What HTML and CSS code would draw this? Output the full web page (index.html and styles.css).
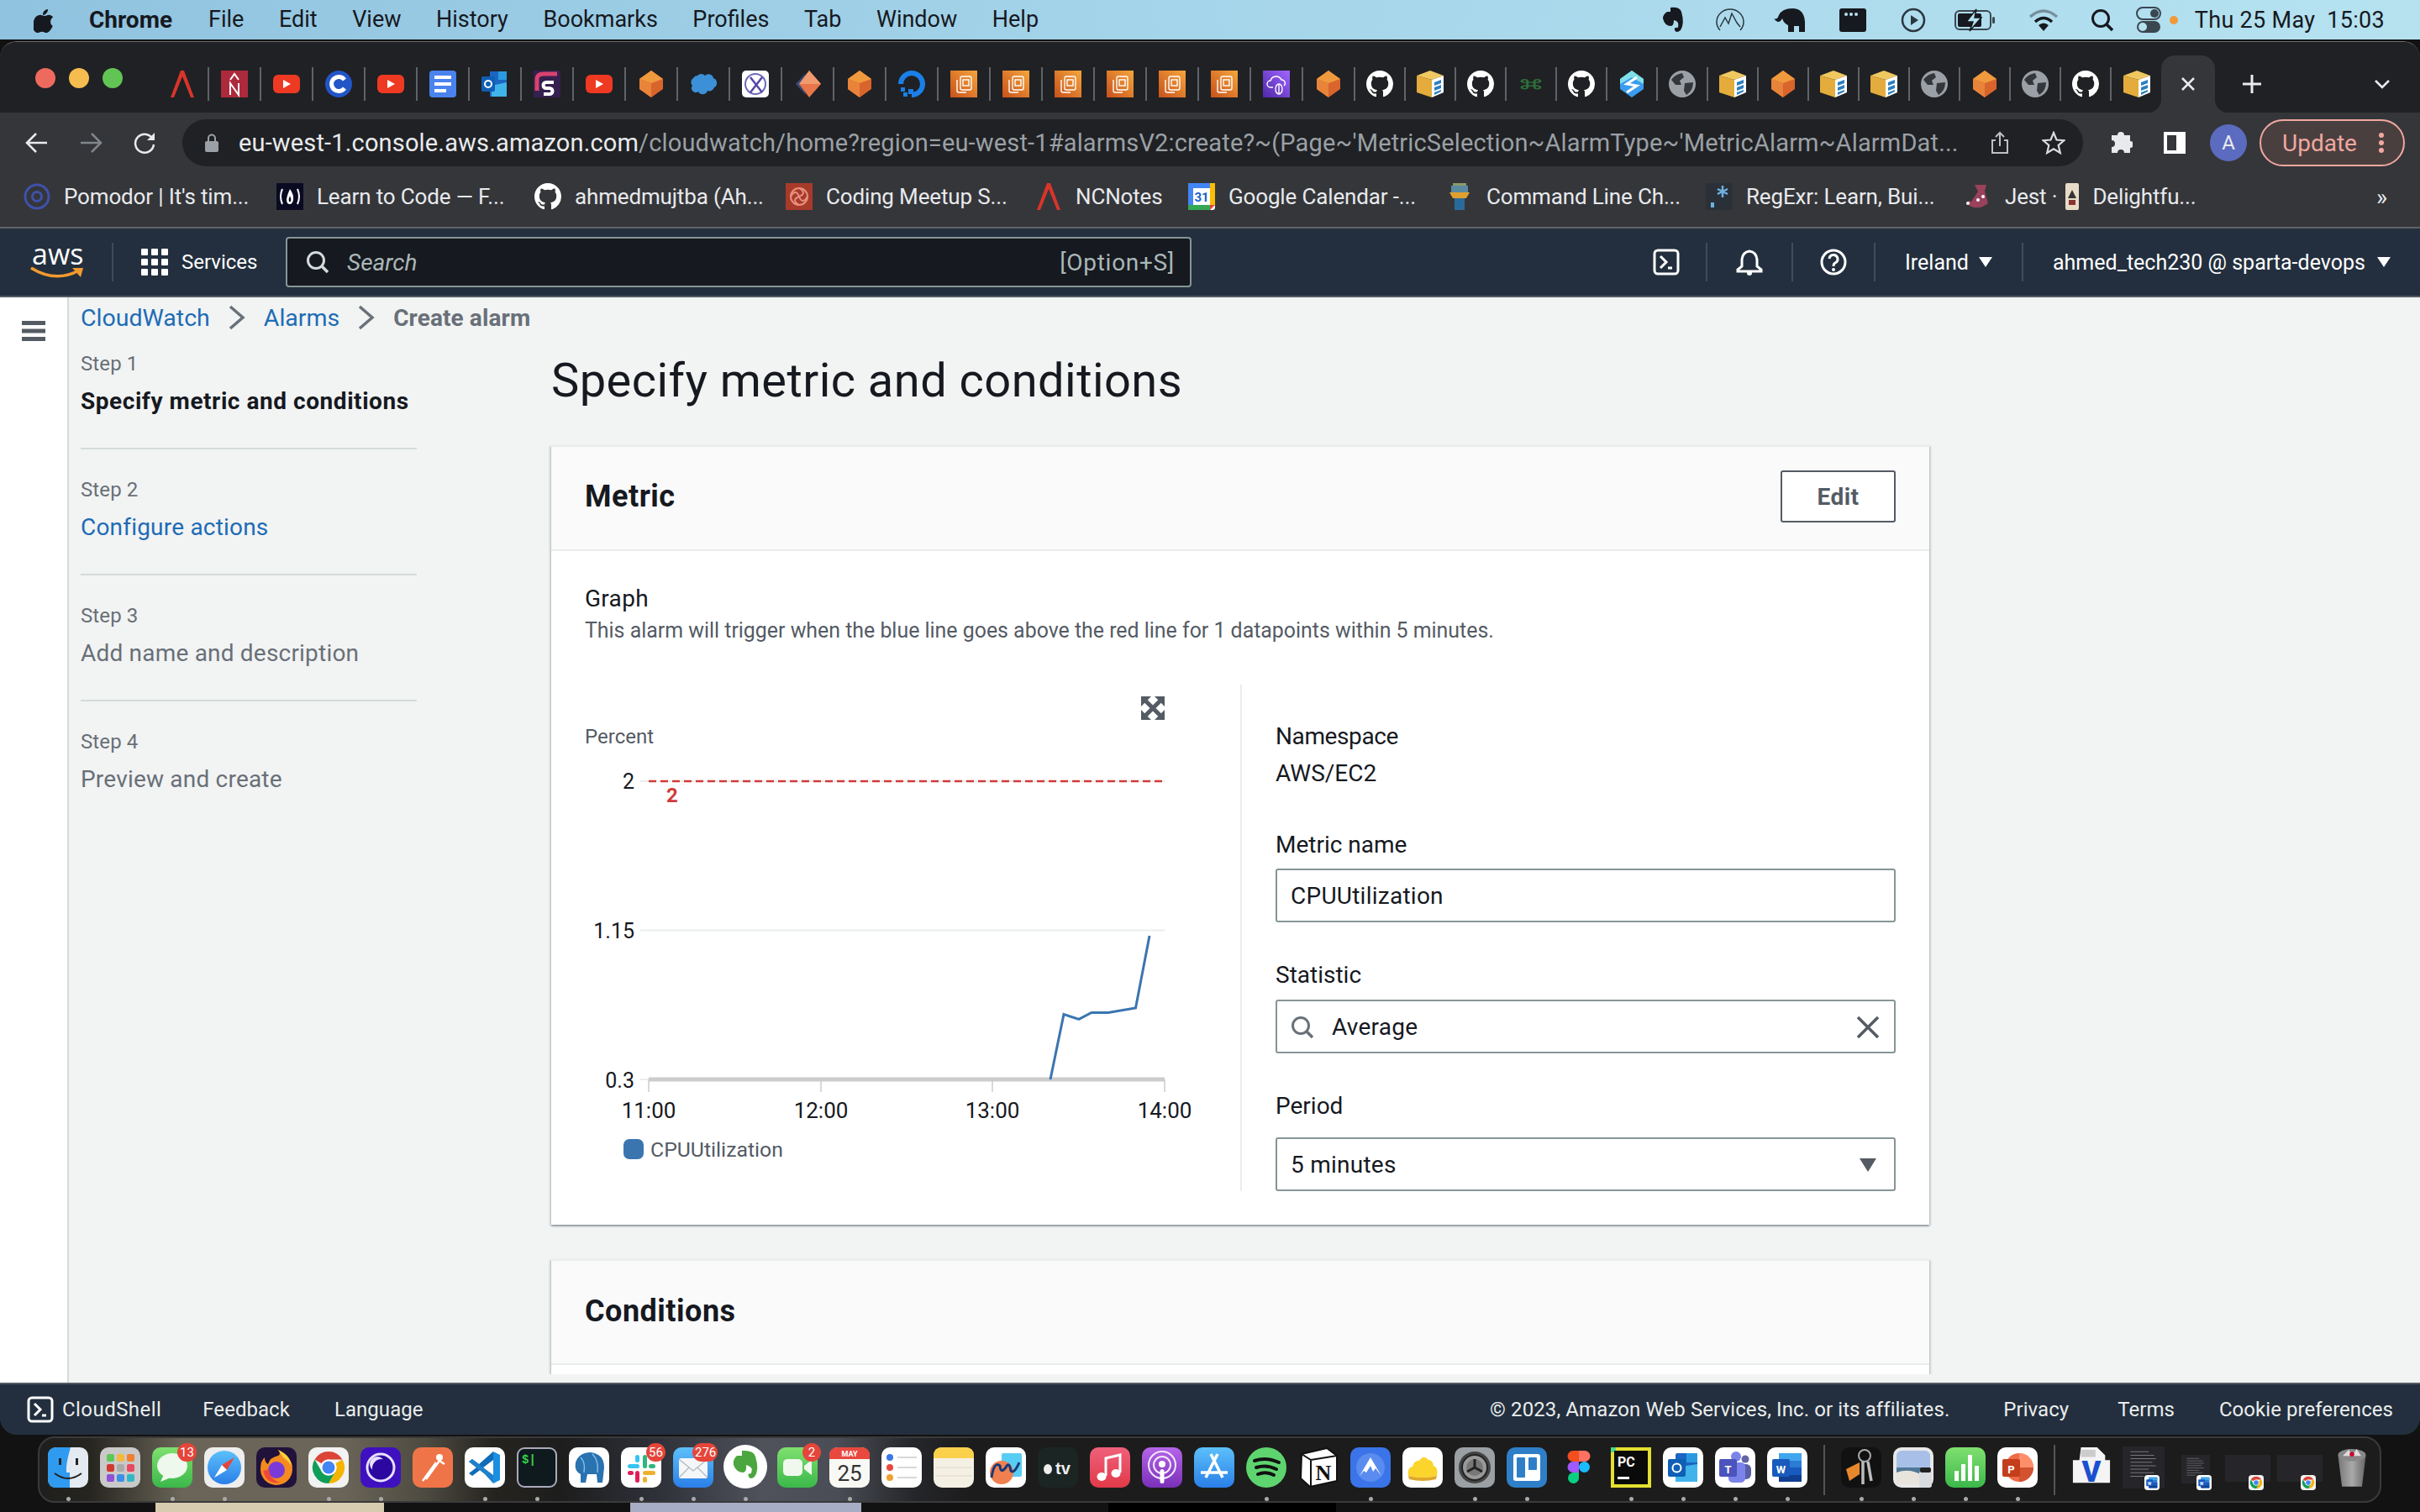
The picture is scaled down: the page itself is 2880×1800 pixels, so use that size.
FILE: index.html
```html
<!DOCTYPE html>
<html lang="en">
<head>
<meta charset="utf-8">
<title>Specify metric and conditions</title>
<link rel="stylesheet" href="styles.css">
</head>
<body>
<svg class="defs" xmlns="http://www.w3.org/2000/svg">
<defs>
<linearGradient id="gOrange" x1="0" y1="1" x2="1" y2="0"><stop offset="0" stop-color="#c8511b"/><stop offset="1" stop-color="#f5a63c"/></linearGradient>
<linearGradient id="gPurple" x1="0" y1="1" x2="1" y2="0"><stop offset="0" stop-color="#4d27a8"/><stop offset="1" stop-color="#a166ff"/></linearGradient>
<linearGradient id="gGreen" x1="0" y1="0" x2="0" y2="1"><stop offset="0" stop-color="#7fe06f"/><stop offset="1" stop-color="#3bb84a"/></linearGradient>
<linearGradient id="gBlue" x1="0" y1="0" x2="0" y2="1"><stop offset="0" stop-color="#5cc0fa"/><stop offset="1" stop-color="#2a7fe8"/></linearGradient>
<linearGradient id="gMusic" x1="0" y1="0" x2="0" y2="1"><stop offset="0" stop-color="#f0607a"/><stop offset="1" stop-color="#e03a48"/></linearGradient>
<linearGradient id="gPod" x1="0" y1="0" x2="0" y2="1"><stop offset="0" stop-color="#b565e8"/><stop offset="1" stop-color="#7a30b8"/></linearGradient>
<linearGradient id="gTrash" x1="0" y1="0" x2="1" y2="0"><stop offset="0" stop-color="#777"/><stop offset=".5" stop-color="#aaa"/><stop offset="1" stop-color="#666"/></linearGradient>

<!-- favicons, 32 box -->
<symbol id="f-caret" viewBox="0 0 32 32"><path d="M2 32 L14 0 H18 L30 32 H26 L16 7 L6 32Z" fill="#d8352a"/></symbol>
<symbol id="f-n" viewBox="0 0 32 32"><rect width="32" height="32" fill="#ac2a3c"/><path d="M11 11 L16 4 L21 11" fill="none" stroke="#fff" stroke-width="2"/><path d="M11 29V15L21 29V15" fill="none" stroke="#fff" stroke-width="2"/></symbol>
<symbol id="f-yt" viewBox="0 0 32 32"><rect y="5" width="32" height="22" rx="6" fill="#ee3a22"/><path d="M12 11 L21 16 L12 21Z" fill="#fff"/></symbol>
<symbol id="f-c" viewBox="0 0 32 32"><circle cx="16" cy="16" r="16" fill="#2255c8"/><path d="M23 11 A8.5 8.5 0 1 0 23 21" fill="none" stroke="#fff" stroke-width="5"/></symbol>
<symbol id="f-docs" viewBox="0 0 32 32"><rect width="32" height="32" rx="4" fill="#4a82ee"/><rect x="6" y="6" width="20" height="4" fill="#fff"/><rect x="6" y="14" width="20" height="4" fill="#fff"/><rect x="6" y="22" width="14" height="4" fill="#fff"/></symbol>
<symbol id="f-outlook" viewBox="0 0 32 32"><rect x="10" y="1" width="20" height="30" fill="#1a66c2"/><rect x="20" y="1" width="10" height="10" fill="#2a9ae0"/><path d="M12 18 L30 14V31H12Z" fill="#40b4ea"/><rect y="7" width="16" height="18" rx="2" fill="#0f5fb5"/><circle cx="8" cy="16" r="4" fill="none" stroke="#fff" stroke-width="2"/></symbol>
<symbol id="f-s" viewBox="0 0 32 32"><rect width="32" height="32" fill="#35204f"/><path d="M4 24V10Q4 4 12 4H28" fill="none" stroke="#d8426e" stroke-width="5"/><path d="M24 14H15a3 3 0 0 0 0 7h4a3 3 0 0 1 0 7H12" fill="none" stroke="#fff" stroke-width="4"/></symbol>
<symbol id="f-hex" viewBox="0 0 32 32"><path d="M16 0 L30 10V22L16 32 L2 22V10Z" fill="#d9642c"/><path d="M16 0 L30 10 L16 15 L2 10Z" fill="#f09a3e"/><path d="M2 10 L16 15V32 L2 22Z" fill="#e8843a"/></symbol>
<symbol id="f-cloud" viewBox="0 0 32 32"><path d="M9 6a6 6 0 0 1 9 0 6 6 0 0 1 10 3 6 6 0 0 1 1 11 6 6 0 0 1-8 4 6 6 0 0 1-11 1 5 5 0 0 1-7-7 6 6 0 0 1 1-9 6 6 0 0 1 5-3z" fill="#3c90d8"/></symbol>
<symbol id="f-x" viewBox="0 0 32 32"><rect width="32" height="32" rx="5" fill="#fff"/><circle cx="16" cy="16" r="12" fill="none" stroke="#6a6ab8" stroke-width="2"/><path d="M10 8 L24 26M24 8 L10 26" stroke="#5545a8" stroke-width="2.5"/></symbol>
<symbol id="f-diamond" viewBox="0 0 32 32"><path d="M14 3 L2 16 L14 29 L10 16Z" fill="#3a4a78"/><path d="M18 0 L32 16 L18 32 L6 16Z" fill="#e8764a"/><path d="M18 0 L6 16 H32Z" fill="#f09a70"/></symbol>
<symbol id="f-do" viewBox="0 0 32 32"><path d="M16 29 A13 13 0 1 0 3 16" fill="none" stroke="#1a7fe8" stroke-width="6"/><rect x="12" y="22" width="6" height="6" fill="#1a7fe8"/><rect x="6" y="26" width="5" height="5" fill="#1a7fe8"/><rect x="3" y="20" width="5" height="5" fill="#1a7fe8"/></symbol>
<symbol id="f-ec2" viewBox="0 0 32 32"><rect width="32" height="32" fill="url(#gOrange)"/><rect x="12" y="7" width="13" height="16" rx="2" fill="none" stroke="#fff" stroke-width="1.4"/><path d="M8 11V24a2 2 0 0 0 2 2H19" fill="none" stroke="#fff" stroke-width="1.4"/><rect x="15" y="11" width="7" height="7" fill="none" stroke="#fff" stroke-width="1.4"/></symbol>
<symbol id="f-pur" viewBox="0 0 32 32"><rect width="32" height="32" fill="url(#gPurple)"/><path d="M12 20H9a4 4 0 0 1 0-8 7 7 0 0 1 13-1 4 4 0 0 1 3 7" fill="none" stroke="#fff" stroke-width="1.4"/><ellipse cx="19" cy="22" rx="4" ry="6" fill="none" stroke="#fff" stroke-width="1.4"/><path d="M19 16V28" stroke="#fff" stroke-width="1.4"/></symbol>
<symbol id="f-gh" viewBox="0 0 16 16"><path fill="#fff" d="M8 0C3.58 0 0 3.58 0 8c0 3.54 2.29 6.53 5.47 7.59.4.07.55-.17.55-.38 0-.19-.01-.82-.01-1.49-2.01.37-2.53-.49-2.69-.94-.09-.23-.48-.94-.82-1.13-.28-.15-.68-.52-.01-.53.63-.01 1.08.58 1.23.82.72 1.21 1.87.87 2.33.66.07-.52.28-.87.51-1.07-1.78-.2-3.64-.89-3.64-3.95 0-.87.31-1.59.82-2.15-.08-.2-.36-1.02.08-2.12 0 0 .67-.21 2.2.82.64-.18 1.32-.27 2-.27.68 0 1.36.09 2 .27 1.53-1.04 2.2-.82 2.2-.82.44 1.1.16 1.92.08 2.12.51.56.82 1.27.82 2.15 0 3.07-1.87 3.75-3.65 3.95.29.25.54.73.54 1.48 0 1.07-.01 1.93-.01 2.2 0 .21.15.46.55.38A8.013 8.013 0 0016 8c0-4.42-3.58-8-8-8z"/></symbol>
<symbol id="f-box" viewBox="0 0 32 32"><path d="M0 6 L16 0 L32 6 L18 11Z" fill="#f0c860"/><path d="M0 6 L18 11V32 L0 26Z" fill="#e4ac3c"/><path d="M18 11 L32 6V26 L18 32Z" fill="#fff"/><path d="M21 14 L29 11V15 L21 18ZM21 20 L29 17V21 L21 24ZM21 26 L29 23V25 L21 29Z" fill="#2a7fc0"/></symbol>
<symbol id="f-cmd" viewBox="0 0 32 32"><g transform="translate(2.500 9.500) scale(.84 .42)"><path d="M11 11H21V21H11ZM11 11V7a4 4 0 1 0-4 4H25a4 4 0 1 0-4-4V25a4 4 0 1 0 4-4H7a4 4 0 1 0 4 4Z" fill="none" stroke="#2f6e3a" stroke-width="3.500"/></g></symbol>
<symbol id="f-shift" viewBox="0 0 32 32"><path d="M16 0 L30 10V22L16 32 L2 22V10Z" fill="#3a9cf0"/><path d="M16 0 L30 10V16L16 8 L2 16V10Z" fill="#7fe0e8"/><path d="M22 8 L10 16 L22 18 L10 26" fill="none" stroke="#fff" stroke-width="3"/></symbol>
<symbol id="f-globe" viewBox="0 0 32 32"><circle cx="16" cy="16" r="16" fill="#9aa0a6"/><path d="M3 11 Q8 4 16 3 L18 8 L13 12 L15 17 L8 17Z M19 15 L29 14 Q29 24 21 29 L18 24Z" fill="#35363a"/></symbol>

<!-- bookmark favicons -->
<symbol id="b-pomo" viewBox="0 0 32 32"><circle cx="16" cy="16" r="14" fill="none" stroke="#3f51a8" stroke-width="3"/><circle cx="16" cy="16" r="5.5" fill="none" stroke="#3f51a8" stroke-width="3"/></symbol>
<symbol id="b-fcc" viewBox="0 0 32 32"><rect width="32" height="32" fill="#0a0a23"/><path d="M7 7 Q3 16 7 25M25 7 Q29 16 25 25" fill="none" stroke="#fff" stroke-width="2"/><path d="M16 7 Q21 14 20 20 Q19 25 16 25 Q12 25 12 20 Q12 16 16 7Z" fill="#fff"/><path d="M16 15 Q18 19 17 22 L15 22 Q14 19 16 15Z" fill="#0a0a23"/></symbol>
<symbol id="b-spark" viewBox="0 0 32 32"><rect width="32" height="32" fill="#a83a2a"/><circle cx="16" cy="16" r="10" fill="none" stroke="#e89080" stroke-width="2"/><path d="M16 6 Q26 12 16 16 Q6 20 16 26M6 16 Q12 6 16 16 Q20 26 26 16" fill="none" stroke="#e89080" stroke-width="2"/></symbol>
<symbol id="b-cal" viewBox="0 0 32 32"><rect width="32" height="32" rx="3" fill="#fff"/><rect width="32" height="6" fill="#4285f4"/><rect width="6" height="32" fill="#4285f4"/><rect x="26" width="6" height="26" fill="#fbbc04"/><rect y="26" width="26" height="6" fill="#34a853"/><path d="M26 26H32L26 32Z" fill="#ea4335"/><text x="16" y="22" class="svg-cal">31</text></symbol>
<symbol id="b-tower" viewBox="0 0 32 32"><rect x="8" width="16" height="3" fill="#8a9a6a"/><rect x="6" y="3" width="20" height="8" fill="#5a8aa0"/><path d="M4 11H28L24 18H8Z" fill="#e0a030"/><rect x="10" y="18" width="12" height="14" fill="#2a6a9a"/></symbol>
<symbol id="b-regex" viewBox="0 0 32 32"><rect width="32" height="32" fill="#2a3038"/><rect x="6" y="23" width="4" height="6" fill="#70b0e0"/><path d="M20 3V17M14 7L26 13M26 7L14 13" stroke="#70b0e0" stroke-width="2.5"/></symbol>
<symbol id="b-jest" viewBox="0 0 32 32"><path d="M12 2H26L24 10 L28 24 Q18 32 8 28 L2 24 Q4 20 8 22 L16 10Z" fill="#99425b"/><circle cx="4" cy="24" r="2" fill="#fff"/><circle cx="16" cy="20" r="2" fill="#fff"/><circle cx="22" cy="16" r="2" fill="#fff"/></symbol>
<symbol id="b-card" viewBox="0 0 32 32"><rect x="8" width="16" height="32" rx="2" fill="#e8dcc8"/><path d="M16 8 L21 18H11Z" fill="#333"/><rect x="12" y="20" width="8" height="6" fill="#833"/></symbol>

<!-- dock icons 48 box -->
<symbol id="d-finder" viewBox="0 0 48 48"><rect width="48" height="48" rx="10" fill="#e4eaf2"/><path d="M10 0H27Q21 20 22 30H26V48H10Q0 48 0 38V10Q0 0 10 0Z" fill="#2f9bf0"/><rect x="13" y="13" width="3" height="8" fill="#222"/><rect x="33" y="13" width="3" height="8" fill="#222"/><path d="M8 31 Q24 43 40 31" fill="none" stroke="#222" stroke-width="2"/></symbol>
<symbol id="d-launch" viewBox="0 0 48 48"><rect width="48" height="48" rx="10" fill="#c9c9c9"/><g><rect x="8" y="8" width="9" height="9" rx="2" fill="#5cc85a"/><rect x="20" y="8" width="9" height="9" rx="2" fill="#f5b83c"/><rect x="32" y="8" width="9" height="9" rx="2" fill="#f08030"/><rect x="8" y="20" width="9" height="9" rx="2" fill="#d03a30"/><rect x="20" y="20" width="9" height="9" rx="2" fill="#aaa"/><rect x="32" y="20" width="9" height="9" rx="2" fill="#e84860"/><rect x="8" y="32" width="9" height="9" rx="2" fill="#9050d8"/><rect x="20" y="32" width="9" height="9" rx="2" fill="#3a90e8"/><rect x="32" y="32" width="9" height="9" rx="2" fill="#30b8c8"/></g></symbol>
<symbol id="d-msg" viewBox="0 0 48 48"><rect width="48" height="48" rx="10" fill="url(#gGreen)"/><ellipse cx="24" cy="22" rx="18" ry="15" fill="#eef8ec"/><path d="M14 32 L10 41 L22 36Z" fill="#eef8ec"/></symbol>
<symbol id="d-safari" viewBox="0 0 48 48"><rect width="48" height="48" rx="10" fill="#eee"/><circle cx="24" cy="24" r="20" fill="url(#gBlue)"/><path d="M36 12 L21 21 L27 27Z" fill="#e8443a"/><path d="M12 36 L21 21 L27 27Z" fill="#fff"/></symbol>
<symbol id="d-fox" viewBox="0 0 48 48"><rect width="48" height="48" rx="10" fill="#20123a"/><path d="M26 3 Q42 10 43 26 A19 19 0 0 1 5 26 Q5 16 10 12 Q10 18 14 20 Q16 12 26 10 Q30 8 26 3Z" fill="#f58a1f"/><path d="M26 3 Q42 10 43 26 Q43 20 32 12Z" fill="#fbd03c"/><circle cx="24" cy="27" r="10" fill="#7a3ad8"/><path d="M8 28 Q12 44 28 42 Q16 38 15 26Z" fill="#f0483a"/></symbol>
<symbol id="d-chrome" viewBox="0 0 48 48"><rect width="48" height="48" rx="10" fill="#f2f2f2"/><path d="M24 5 A19 19 0 0 1 40.5 14.5 H24 A9.5 9.5 0 0 0 15.8 19.2 L7.5 14.5 A19 19 0 0 1 24 5Z" fill="#db4437"/><path d="M40.5 14.5 A19 19 0 0 1 24 43 L32.2 28.8 A9.5 9.5 0 0 0 32.2 19.2 Z" fill="#f4b400"/><path d="M7.5 14.5 L15.8 28.8 A9.5 9.5 0 0 0 32.2 28.8 L24 43 A19 19 0 0 1 7.5 14.5Z" fill="#0f9d58"/><circle cx="24" cy="24" r="9.5" fill="#fff"/><circle cx="24" cy="24" r="7.5" fill="#4285f4"/></symbol>
<symbol id="d-proton" viewBox="0 0 48 48"><rect width="48" height="48" rx="10" fill="#3f10c0"/><circle cx="24" cy="24" r="16" fill="#2c08a0" stroke="#e8e0ff" stroke-width="3"/><circle cx="20" cy="20" r="9" fill="#e8e0ff"/><circle cx="25" cy="25" r="11" fill="#2c08a0"/></symbol>
<symbol id="d-postman" viewBox="0 0 48 48"><rect width="48" height="48" rx="10" fill="#ef7548"/><path d="M12 40 L28 18 M16 38 L32 16 M32 16 L38 20" stroke="#fff" stroke-width="2.5" fill="none"/><circle cx="32" cy="12" r="4" fill="#fff"/></symbol>
<symbol id="d-vscode" viewBox="0 0 48 48"><rect width="48" height="48" rx="10" fill="#fff"/><path d="M34 5 L42 9V39L34 43Z" fill="#1c8fe0"/><path d="M34 5V15 L17 28 L9 34 L5 31 L14 24 L5 17 L9 14 L17 20Z" fill="#0f6cb8"/><path d="M34 43V33 L9 14 L5 17 L24 32 Z" fill="#1f80cc"/></symbol>
<symbol id="d-term" viewBox="0 0 48 48"><rect x="1" y="1" width="46" height="46" rx="8" fill="#0f1a1e" stroke="#aab" stroke-width="2"/><text x="6" y="19" class="svg-term">$|</text></symbol>
<symbol id="d-pg" viewBox="0 0 48 48"><rect width="48" height="48" rx="10" fill="#fff"/><path d="M8 18 Q12 6 26 6 Q42 8 42 24 L40 42 H34 L33 32 H22 L20 42 H14 L14 32 Q6 28 8 18Z" fill="#2a72b0"/><path d="M14 12 Q20 18 18 30M28 8 Q36 16 34 30" fill="none" stroke="#80c0e8" stroke-width="1.5"/></symbol>
<symbol id="d-slack" viewBox="0 0 48 48"><rect width="48" height="48" rx="10" fill="#fff"/><rect x="8" y="20" width="14" height="5" rx="2.5" fill="#36c5f0"/><rect x="17" y="9" width="5" height="9" rx="2.5" fill="#36c5f0"/><rect x="26" y="9" width="5" height="16" rx="2.5" fill="#2eb67d"/><rect x="33" y="20" width="8" height="5" rx="2.5" fill="#2eb67d"/><rect x="26" y="28" width="15" height="5" rx="2.5" fill="#ecb22e"/><rect x="26" y="35" width="5" height="7" rx="2.5" fill="#ecb22e"/><rect x="17" y="28" width="5" height="14" rx="2.5" fill="#e01e5a"/><rect x="8" y="28" width="7" height="5" rx="2.5" fill="#e01e5a"/></symbol>
<symbol id="d-mail" viewBox="0 0 48 48"><rect width="48" height="48" rx="10" fill="url(#gBlue)"/><rect x="7" y="13" width="34" height="24" rx="2" fill="#f4f6f8"/><path d="M7 14 L24 28 L41 14M7 36 L19 24M41 36 L29 24" fill="none" stroke="#b0b8c0" stroke-width="1.2"/></symbol>
<symbol id="d-ever" viewBox="0 0 52 52"><circle cx="26" cy="26" r="26" fill="#fff"/><path d="M16 13 H22 V7 Q36 6 38 14 Q43 30 37 38 Q32 42 30 38 Q28 34 33 34 Q36 26 27 24 Q28 31 24 33 Q15 33 12 24 Q11 17 16 13Z" fill="#4ca63f"/></symbol>
<symbol id="d-face" viewBox="0 0 48 48"><rect width="48" height="48" rx="10" fill="url(#gGreen)"/><rect x="7" y="14" width="23" height="20" rx="5" fill="#f0f8ee"/><path d="M32 22 L41 15V33 L32 26Z" fill="#f0f8ee"/></symbol>
<symbol id="d-cal" viewBox="0 0 48 48"><rect width="48" height="48" rx="10" fill="#f8f8f4"/><path d="M0 14V10Q0 0 10 0H38Q48 0 48 10V14Z" fill="#e8483e"/><text x="24" y="11" class="svg-may">MAY</text><text x="24" y="40" class="svg-day">25</text></symbol>
<symbol id="d-rem" viewBox="0 0 48 48"><rect width="48" height="48" rx="10" fill="#fff"/><circle cx="10" cy="12" r="4" fill="#3a78e8"/><circle cx="10" cy="24" r="4" fill="#e8483e"/><circle cx="10" cy="36" r="4" fill="#f0a030"/><path d="M19 12H42M19 24H42M19 36H42" stroke="#ccc" stroke-width="1.5"/></symbol>
<symbol id="d-notes" viewBox="0 0 48 48"><rect width="48" height="48" rx="10" fill="#f4f0e4"/><path d="M0 13V10Q0 0 10 0H38Q48 0 48 10V13Z" fill="#fbd14c"/><path d="M2 24H46M2 34H46" stroke="#ddd8c8" stroke-width="1"/></symbol>
<symbol id="d-free" viewBox="0 0 48 48"><rect width="48" height="48" rx="10" fill="#fff"/><rect x="19" y="7" width="24" height="28" rx="2" fill="#58cdf4"/><circle cx="19" cy="30" r="14" fill="#f08050"/><path d="M7 36 Q10 16 17 22 Q18 32 24 24 Q28 16 30 28 Q34 32 40 18" fill="none" stroke="#163a78" stroke-width="3"/></symbol>
<symbol id="d-tv" viewBox="0 0 48 48"><rect width="48" height="48" rx="10" fill="#1b2524"/><ellipse cx="12" cy="26" rx="5" ry="6" fill="#eee"/><text x="30" y="32" class="svg-tv">tv</text></symbol>
<symbol id="d-music" viewBox="0 0 48 48"><rect width="48" height="48" rx="10" fill="url(#gMusic)"/><path d="M19 34V13L36 9V30" fill="none" stroke="#fff" stroke-width="3"/><ellipse cx="14" cy="35" rx="5.5" ry="5" fill="#fff"/><ellipse cx="31" cy="31" rx="5.5" ry="5" fill="#fff"/></symbol>
<symbol id="d-pod" viewBox="0 0 48 48"><rect width="48" height="48" rx="10" fill="url(#gPod)"/><circle cx="24" cy="21" r="16" fill="none" stroke="#f4e8ff" stroke-width="2"/><circle cx="24" cy="21" r="10" fill="none" stroke="#f4e8ff" stroke-width="2"/><circle cx="24" cy="20" r="4" fill="#fff"/><rect x="21.500" y="26" width="5" height="17" rx="2.500" fill="#fff"/></symbol>
<symbol id="d-store" viewBox="0 0 48 48"><rect width="48" height="48" rx="10" fill="url(#gBlue)"/><path d="M28 8 L14 36M20 8 L34 36M8 30H40" stroke="#fff" stroke-width="3.500" fill="none"/></symbol>
<symbol id="d-spot" viewBox="0 0 48 48"><circle cx="24" cy="24" r="24" fill="#5ed46f"/><path d="M10 16 Q24 11 39 18M12 24 Q24 20 36 26M14 32 Q24 28 33 33" fill="none" stroke="#111" stroke-width="4" stroke-linecap="round"/></symbol>
<symbol id="d-notion" viewBox="0 0 48 48"><path d="M4 8 L34 1 L46 10V40L14 47 L3 37Z" fill="#fff" stroke="#111" stroke-width="2"/><path d="M4 8 L15 15 L46 10M15 15V47" fill="none" stroke="#111" stroke-width="2"/><text x="30" y="39" class="svg-notion">N</text></symbol>
<symbol id="d-nord" viewBox="0 0 48 48"><rect width="48" height="48" rx="10" fill="#3a74e8"/><circle cx="24" cy="24" r="17" fill="#5a8cf0"/><path d="M11 34 L24 12 L37 34 L30 25 L27 29 L24 22 L19 30 L16 28Z" fill="#fff"/></symbol>
<symbol id="d-ycloud" viewBox="0 0 48 48"><rect width="48" height="48" rx="10" fill="#fff"/><path d="M7 34 Q5 24 12 23 Q14 15 20 16 Q25 8 31 15 Q36 15 37 22 Q43 24 41 34 Q24 38 7 34Z" fill="#fbd52c"/><path d="M7 34 Q24 38 41 34 L40 38 Q24 42 8 38Z" fill="#e0a828"/></symbol>
<symbol id="d-sys" viewBox="0 0 48 48"><rect width="48" height="48" rx="10" fill="#9aa0a4"/><circle cx="24" cy="24" r="19" fill="#444"/><circle cx="24" cy="24" r="15" fill="#999" stroke="#222" stroke-width="2"/><circle cx="24" cy="24" r="10" fill="#777"/><path d="M24 24V14M24 24L33 29M24 24L15 29" stroke="#222" stroke-width="3"/></symbol>
<symbol id="d-trello" viewBox="0 0 48 48"><rect width="48" height="48" rx="10" fill="#2f7fc8"/><rect x="8" y="8" width="32" height="32" rx="3" fill="#fff"/><rect x="12" y="12" width="10" height="24" rx="1" fill="#2f7fc8"/><rect x="26" y="12" width="10" height="15" rx="1" fill="#2f7fc8"/></symbol>
<symbol id="d-figma" viewBox="0 0 48 48"><rect width="48" height="48" rx="10" fill="#1c1c1c"/><path d="M24 4H17a6 6 0 0 0 0 13H24Z" fill="#f24e1e"/><path d="M24 4H31a6 6 0 0 1 0 13H24Z" fill="#ff7262"/><path d="M24 17H17a6 6 0 0 0 0 13H24Z" fill="#a259ff"/><circle cx="30.500" cy="23.500" r="6.500" fill="#1abcfe"/><path d="M24 30H17a6.500 6.500 0 1 0 7 6.500Z" fill="#0acf83"/></symbol>
<symbol id="d-py" viewBox="0 0 48 48"><rect width="48" height="48" fill="#e4e030"/><rect x="0" y="0" width="6" height="6" fill="#4ad88a"/><rect x="4" y="4" width="40" height="40" fill="#0a0a0a"/><text x="8" y="23" class="svg-pc">PC</text><rect x="8" y="35" width="14" height="3" fill="#fff"/></symbol>
<symbol id="d-out" viewBox="0 0 48 48"><rect width="48" height="48" rx="10" fill="#fff"/><rect x="15" y="7" width="26" height="34" rx="2" fill="#1a66c2"/><rect x="28" y="7" width="13" height="11" fill="#2a9ae0"/><path d="M15 24 L41 20V41H15Z" fill="#40b4ea"/><rect x="6" y="14" width="21" height="21" rx="2" fill="#0f5fb5"/><circle cx="16.500" cy="24.500" r="5" fill="none" stroke="#fff" stroke-width="2"/></symbol>
<symbol id="d-teams" viewBox="0 0 48 48"><rect width="48" height="48" rx="10" fill="#fff"/><circle cx="36" cy="14" r="4.500" fill="#6264a7"/><circle cx="25" cy="11" r="6" fill="#7b83eb"/><rect x="29" y="20" width="14" height="18" rx="6" fill="#5a5fa8"/><rect x="16" y="18" width="20" height="24" rx="5" fill="#7b83eb"/><rect x="5" y="14" width="21" height="21" rx="2" fill="#4b53bc"/><text x="15.500" y="31" class="svg-off">T</text></symbol>
<symbol id="d-word" viewBox="0 0 48 48"><rect width="48" height="48" rx="10" fill="#fff"/><rect x="14" y="7" width="27" height="34" rx="2" fill="#2b7cd3"/><rect x="14" y="7" width="27" height="9" fill="#41a5ee"/><rect x="14" y="24" width="27" height="9" fill="#185abd"/><rect x="14" y="33" width="27" height="8" fill="#103f91"/><rect x="6" y="14" width="21" height="21" rx="2" fill="#185abd"/><text x="16.500" y="31" class="svg-off">W</text></symbol>
<symbol id="d-key" viewBox="0 0 48 48"><rect width="48" height="48" rx="10" fill="#111"/><circle cx="28" cy="10" r="7" fill="none" stroke="#aaa" stroke-width="2"/><path d="M26 17V44M32 17L36 40" stroke="#bbb" stroke-width="3.500"/><path d="M6 26 L22 18 L22 32 L10 40Z" fill="#e8882c"/></symbol>
<symbol id="d-prev" viewBox="0 0 48 48"><rect width="48" height="48" rx="10" fill="#e8e8e8"/><rect x="4" y="4" width="40" height="40" rx="6" fill="#a8c0e8"/><rect x="4" y="24" width="40" height="20" fill="#507898"/><path d="M4 30 Q20 24 36 34V44H4Z" fill="#e8e4dc"/><rect x="31" y="28" width="15" height="20" rx="3" fill="#d8dce0"/><rect x="32" y="24" width="13" height="6" rx="2" fill="#222"/></symbol>
<symbol id="d-num" viewBox="0 0 48 48"><rect width="48" height="48" rx="10" fill="url(#gGreen)"/><rect x="11" y="28" width="5" height="12" fill="#fff"/><rect x="19" y="20" width="5" height="20" fill="#fff"/><rect x="27" y="9" width="5" height="31" fill="#fff"/><rect x="35" y="22" width="5" height="18" fill="#fff"/></symbol>
<symbol id="d-ppt" viewBox="0 0 48 48"><rect width="48" height="48" rx="10" fill="#fff"/><circle cx="26" cy="24" r="17" fill="#ed6c47"/><path d="M26 7 A17 17 0 0 1 43 24 H26Z" fill="#ff8f6b"/><path d="M26 24H43 A17 17 0 0 1 26 41Z" fill="#d35230"/><rect x="6" y="14" width="21" height="21" rx="2" fill="#c43e1c"/><text x="16.500" y="31" class="svg-off">P</text></symbol>
<symbol id="d-v" viewBox="0 0 50 50"><path d="M12 0H32L42 10V16H48V44H2V16H10Z" fill="#f4f4f4"/><path d="M12 3H30V12H12Z" fill="#ccc"/><text x="25" y="43" class="svg-v">V</text></symbol>
<symbol id="d-thumb" viewBox="0 0 48 48"><rect width="48" height="48" fill="#26262a"/><path d="M9 6H30M9 10H36M9 14H38M9 18H34M9 22H38M9 26H30M9 30H36M9 34H24" stroke="#777" stroke-width="1"/></symbol>
<symbol id="d-trash" viewBox="0 0 48 56"><path d="M6 14H42L37 54H11Z" fill="url(#gTrash)"/><ellipse cx="24" cy="13" rx="18" ry="8" fill="#888"/><path d="M12 14 L20 6 L24 14 L30 5 L36 14Z" fill="#ddd"/><circle cx="24" cy="12" r="3" fill="#c03"/></symbol>
</defs>
</svg>

<header class="menubar">
  <svg class="apple" viewBox="0 0 24 30"><path fill="#16191f" d="M17 2c.2 2-.6 3.600-1.700 4.800-1.100 1.300-2.700 2.200-4.300 2-.2-1.800.7-3.600 1.700-4.700C13.800 2.900 15.600 2 17 2zM22.700 22c-.8 1.800-1.200 2.600-2.200 4.100-1.400 2.100-3 4-5.300 4-2 0-2.600-1.300-5.200-1.300s-3.300 1.300-5.300 1.300c-2.200 0-3.800-2-5.100-3.800C-.5 22.900-1 14.800 2.300 11.400 3.900 9.700 6 8.700 8 8.700c2.100 0 3.400 1.300 5.100 1.300 1.700 0 2.700-1.300 5.100-1.300 1.800 0 3.700 1 5 2.700-4.400 2.500-3.700 8.700-.5 10.600z"/></svg>
  <nav class="menu-items">
    <span class="menu-app">Chrome</span><span>File</span><span>Edit</span><span>View</span><span>History</span><span>Bookmarks</span><span>Profiles</span><span>Tab</span><span>Window</span><span>Help</span>
  </nav>
  <div class="status">
    <svg class="st st-ever" viewBox="0 0 28 32"><path fill="#16191f" d="M7 6H11V1Q22 0 24 6 Q28 20 23 28 Q18 32 16 28 Q15 24 20 25 Q22 17 15 16 Q15 22 12 23 Q4 23 2 14 Q2 9 7 6Z"/></svg>
    <svg class="st st-mtn" viewBox="0 0 36 32"><path fill="none" stroke="#2b3640" stroke-width="1.500" d="M6 28A16 15 0 1 1 30 28M6 24L12 13L16 20L20 8L26 19L30 24"/></svg>
    <svg class="st st-ele" viewBox="0 0 40 32"><path fill="#16191f" d="M0 14Q4 16 6 10Q10 2 22 2Q36 2 37 18V30H30V23H24V30H17V22Q12 20 10 14Q6 22 0 14Z"/></svg>
    <svg class="st st-win" viewBox="0 0 32 32"><rect y="2" width="32" height="28" rx="3" fill="#16191f"/><circle cx="8" cy="9" r="2" fill="#b5e1ef"/><circle cx="14" cy="9" r="2" fill="#b5e1ef"/><circle cx="20" cy="9" r="2" fill="#b5e1ef"/></svg>
    <svg class="st st-play" viewBox="0 0 32 32"><circle cx="16" cy="16" r="13" fill="none" stroke="#2b3640" stroke-width="2.500"/><path d="M13 10L22 16L13 22Z" fill="#2b3640"/></svg>
    <svg class="st st-bat" viewBox="0 0 50 28"><rect x="1" y="3" width="42" height="22" rx="5" fill="none" stroke="#3a4650" stroke-width="2"/><rect x="4" y="6" width="28" height="16" rx="2" fill="#16191f"/><rect x="45" y="10" width="3" height="8" rx="1.500" fill="#3a4650"/><path d="M26 1L14 16H22L18 27L32 11H24Z" fill="#b5e1ef" stroke="#16191f" stroke-width="1.500"/></svg>
    <svg class="st st-wifi" viewBox="0 0 36 28"><path d="M2 10Q18-4 34 10" fill="none" stroke="#77909c" stroke-width="3.500"/><path d="M8 16Q18 7 28 16" fill="none" stroke="#16191f" stroke-width="3.500"/><path d="M18 27L12 20Q18 15 24 20Z" fill="#16191f"/></svg>
    <svg class="st st-find" viewBox="0 0 28 28"><circle cx="12" cy="12" r="9.500" fill="none" stroke="#16191f" stroke-width="3"/><path d="M19 19L26 26" stroke="#16191f" stroke-width="3.500"/></svg>
    <svg class="st st-cc" viewBox="0 0 30 32"><rect x="1" y="1" width="28" height="14" rx="7" fill="none" stroke="#3a4650" stroke-width="2"/><circle cx="22" cy="8" r="5" fill="#3a4650"/><rect x="1" y="17" width="28" height="14" rx="7" fill="#3a4650"/><circle cx="8" cy="24" r="5" fill="#b5e1ef"/></svg>
    <span class="st-dot"></span>
    <span class="clock">Thu 25 May&nbsp; 15:03</span>
  </div>
</header>

<div class="window">
  <div class="tabstrip">
    <div class="lights"><i class="l-red"></i><i class="l-yel"></i><i class="l-grn"></i></div>
    <div class="tab"><svg class="fav"><use href="#f-caret"/></svg></div>
    <div class="tab"><svg class="fav"><use href="#f-n"/></svg></div>
    <div class="tab"><svg class="fav"><use href="#f-yt"/></svg></div>
    <div class="tab"><svg class="fav"><use href="#f-c"/></svg></div>
    <div class="tab"><svg class="fav"><use href="#f-yt"/></svg></div>
    <div class="tab"><svg class="fav"><use href="#f-docs"/></svg></div>
    <div class="tab"><svg class="fav"><use href="#f-outlook"/></svg></div>
    <div class="tab"><svg class="fav"><use href="#f-s"/></svg></div>
    <div class="tab"><svg class="fav"><use href="#f-yt"/></svg></div>
    <div class="tab"><svg class="fav"><use href="#f-hex"/></svg></div>
    <div class="tab"><svg class="fav"><use href="#f-cloud"/></svg></div>
    <div class="tab"><svg class="fav"><use href="#f-x"/></svg></div>
    <div class="tab"><svg class="fav"><use href="#f-diamond"/></svg></div>
    <div class="tab"><svg class="fav"><use href="#f-hex"/></svg></div>
    <div class="tab"><svg class="fav"><use href="#f-do"/></svg></div>
    <div class="tab"><svg class="fav"><use href="#f-ec2"/></svg></div>
    <div class="tab"><svg class="fav"><use href="#f-ec2"/></svg></div>
    <div class="tab"><svg class="fav"><use href="#f-ec2"/></svg></div>
    <div class="tab"><svg class="fav"><use href="#f-ec2"/></svg></div>
    <div class="tab"><svg class="fav"><use href="#f-ec2"/></svg></div>
    <div class="tab"><svg class="fav"><use href="#f-ec2"/></svg></div>
    <div class="tab"><svg class="fav"><use href="#f-pur"/></svg></div>
    <div class="tab"><svg class="fav"><use href="#f-hex"/></svg></div>
    <div class="tab tab-n"><svg class="fav"><use href="#f-gh"/></svg></div>
    <div class="tab tab-n"><svg class="fav"><use href="#f-box"/></svg></div>
    <div class="tab tab-n"><svg class="fav"><use href="#f-gh"/></svg></div>
    <div class="tab tab-n"><svg class="fav"><use href="#f-cmd"/></svg></div>
    <div class="tab tab-n"><svg class="fav"><use href="#f-gh"/></svg></div>
    <div class="tab tab-n"><svg class="fav"><use href="#f-shift"/></svg></div>
    <div class="tab tab-n"><svg class="fav"><use href="#f-globe"/></svg></div>
    <div class="tab tab-n"><svg class="fav"><use href="#f-box"/></svg></div>
    <div class="tab tab-n"><svg class="fav"><use href="#f-hex"/></svg></div>
    <div class="tab tab-n"><svg class="fav"><use href="#f-box"/></svg></div>
    <div class="tab tab-n"><svg class="fav"><use href="#f-box"/></svg></div>
    <div class="tab tab-n"><svg class="fav"><use href="#f-globe"/></svg></div>
    <div class="tab tab-n"><svg class="fav"><use href="#f-hex"/></svg></div>
    <div class="tab tab-n"><svg class="fav"><use href="#f-globe"/></svg></div>
    <div class="tab tab-n"><svg class="fav"><use href="#f-gh"/></svg></div>
    <div class="tab tab-last"><svg class="fav"><use href="#f-box"/></svg></div>
    <div class="tab-active"><svg class="tab-x" viewBox="0 0 20 20"><path d="M3 3L17 17M17 3L3 17" stroke="#e8eaed" stroke-width="2.500"/></svg></div>
    <svg class="tab-plus" viewBox="0 0 24 24"><path d="M12 1V23M1 12H23" stroke="#e8eaed" stroke-width="3"/></svg>
    <svg class="tab-chev" viewBox="0 0 20 12"><path d="M2 2L10 10L18 2" fill="none" stroke="#e8eaed" stroke-width="2.500"/></svg>
  </div>

  <div class="toolbar">
    <div class="tb-btn"><svg class="tb-ico" viewBox="0 0 28 28"><path d="M26 14H3M13 3L2 14L13 25" fill="none" stroke="#e8eaed" stroke-width="2.500"/></svg></div>
    <div class="tb-btn"><svg class="tb-ico" viewBox="0 0 28 28"><path d="M2 14H25M15 3L26 14L15 25" fill="none" stroke="#80868b" stroke-width="2.500"/></svg></div>
    <div class="tb-btn"><svg class="tb-ico" viewBox="0 0 28 28"><path d="M24 10A11 11 0 1 0 25 16" fill="none" stroke="#e8eaed" stroke-width="2.500"/><path d="M26 2V11H17Z" fill="#e8eaed"/></svg></div>
    <div class="omnibox">
      <svg class="lock" viewBox="0 0 18 24"><path d="M5 10V6.500a4 4 0 0 1 8 0V10" fill="none" stroke="#9aa0a6" stroke-width="2"/><rect x="1" y="10" width="16" height="13" rx="2" fill="#9aa0a6"/></svg>
      <div class="url"><span class="url-host">eu-west-1.console.aws.amazon.com</span>/cloudwatch/home?region=eu-west-1#alarmsV2:create?~(Page~'MetricSelection~AlarmType~'MetricAlarm~AlarmDat...</div>
      <div class="tb-btn"><svg class="tb-ico" viewBox="0 0 28 28"><path d="M9 11H5V26H23V11H19M14 18V2M9 7L14 2L19 7" fill="none" stroke="#bdc1c6" stroke-width="2"/></svg></div>
      <div class="tb-btn"><svg class="tb-ico" viewBox="0 0 28 28"><path d="M14 2L17.500 10.500L26.500 11.200L19.700 17L21.800 26L14 21.200L6.200 26L8.300 17L1.500 11.200L10.500 10.500Z" fill="none" stroke="#dadce0" stroke-width="2.200"/></svg></div>
    </div>
    <div class="tb-btn"><svg class="tb-ico" viewBox="0 0 28 28"><path fill="#e8eaed" d="M10 5a4 4 0 0 1 8 0h7v7a4 4 0 0 1 0 8v6h-7a4 4 0 0 0-8 0H3v-7a4 4 0 0 0 0-8V5z"/></svg></div>
    <div class="tb-btn"><svg class="tb-ico" viewBox="0 0 28 28"><rect x="1" y="1" width="26" height="26" fill="#fff"/><rect x="5" y="5" width="11" height="18" fill="#35363a"/></svg></div>
    <div class="tb-btn"><span class="avatar">A</span></div>
    <div class="update"><span>Update</span><svg class="update-dots" viewBox="0 0 6 24"><circle cx="3" cy="3" r="3" fill="#f0a8a0"/><circle cx="3" cy="12" r="3" fill="#f0a8a0"/><circle cx="3" cy="21" r="3" fill="#f0a8a0"/></svg></div>
  </div>

  <div class="bookmarks">
    <div class="bm"><svg class="fav"><use href="#b-pomo"/></svg><span>Pomodor | It's tim...</span></div>
    <div class="bm"><svg class="fav"><use href="#b-fcc"/></svg><span>Learn to Code — F...</span></div>
    <div class="bm"><svg class="fav"><use href="#f-gh"/></svg><span>ahmedmujtba (Ah...</span></div>
    <div class="bm"><svg class="fav"><use href="#b-spark"/></svg><span>Coding Meetup S...</span></div>
    <div class="bm"><svg class="fav"><use href="#f-caret"/></svg><span>NCNotes</span></div>
    <div class="bm"><svg class="fav"><use href="#b-cal"/></svg><span>Google Calendar -...</span></div>
    <div class="bm"><svg class="fav"><use href="#b-tower"/></svg><span>Command Line Ch...</span></div>
    <div class="bm"><svg class="fav"><use href="#b-regex"/></svg><span>RegExr: Learn, Bui...</span></div>
    <div class="bm"><svg class="fav"><use href="#b-jest"/></svg><span>Jest ·</span><svg class="fav bm-card"><use href="#b-card"/></svg><span>Delightfu...</span></div>
    <span class="bm-more">»</span>
  </div>

  <div class="aws-head">
    <div class="aws-logo">
      <span class="aws-word">aws</span>
      <svg class="aws-smile" viewBox="0 0 64 16"><path d="M1 2Q30 20 58 5" fill="none" stroke="#f29a2e" stroke-width="3.500"/><path d="M50 2H63L60 13Z" fill="#f29a2e"/></svg>
    </div>
    <div class="aws-services">
      <svg class="aws-grid" viewBox="0 0 32 32"><g fill="#fff"><rect width="8" height="8" rx="1"/><rect x="12" width="8" height="8" rx="1"/><rect x="24" width="8" height="8" rx="1"/><rect y="12" width="8" height="8" rx="1"/><rect x="12" y="12" width="8" height="8" rx="1"/><rect x="24" y="12" width="8" height="8" rx="1"/><rect y="24" width="8" height="8" rx="1"/><rect x="12" y="24" width="8" height="8" rx="1"/><rect x="24" y="24" width="8" height="8" rx="1"/></g></svg>
      <span>Services</span>
    </div>
    <div class="aws-search">
      <svg class="aws-mag" viewBox="0 0 28 28"><circle cx="12" cy="12" r="9.500" fill="none" stroke="#d5dbdb" stroke-width="3"/><path d="M19 19L26 26" stroke="#d5dbdb" stroke-width="3.500"/></svg>
      <span class="aws-ph">Search</span>
      <span class="aws-key">[Option+S]</span>
    </div>
    <div class="aws-right">
      <div class="ar ar-1"><svg class="shell" viewBox="0 0 32 32"><rect x="2" y="2" width="28" height="28" rx="4" fill="none" stroke="#fff" stroke-width="3"/><path d="M9 9L16 16L9 23M18 23H23" fill="none" stroke="#fff" stroke-width="3"/></svg></div>
      <div class="ar ar-2"><svg class="shell" viewBox="0 0 32 32"><path d="M16 3Q24 4 25 13V21L30 25V27H2V25L7 21V13Q8 4 16 3Z" fill="none" stroke="#fff" stroke-width="3"/><circle cx="16" cy="29" r="3" fill="#fff"/></svg></div>
      <div class="ar ar-3"><svg class="shell" viewBox="0 0 32 32"><circle cx="16" cy="16" r="14" fill="none" stroke="#fff" stroke-width="3"/><path d="M11 12a5 5 0 1 1 7 5Q16 18 16 21" fill="none" stroke="#fff" stroke-width="3"/><circle cx="16" cy="25" r="2" fill="#fff"/></svg></div>
      <div class="ar ar-4"><span>Ireland</span><i class="caret"></i></div>
      <div class="ar ar-5"><span>ahmed_tech230 @ sparta-devops</span><i class="caret"></i></div>
    </div>
  </div>

  <div class="console">
    <aside class="rail">
      <svg class="burger" viewBox="0 0 28 24"><path d="M0 2.500H28M0 12H28M0 21.500H28" stroke="#545b64" stroke-width="5"/></svg>
    </aside>
    <div class="workspace">
      <nav class="crumbs">
        <a>CloudWatch</a>
        <svg class="crumb-sep" viewBox="0 0 20 30"><path d="M2 2L17 15L2 28" fill="none" stroke="#687078" stroke-width="3.500"/></svg>
        <a>Alarms</a>
        <svg class="crumb-sep" viewBox="0 0 20 30"><path d="M2 2L17 15L2 28" fill="none" stroke="#687078" stroke-width="3.500"/></svg>
        <span class="crumb-here">Create alarm</span>
      </nav>
      <div class="wizard">
        <ol class="steps">
          <li class="step"><small>Step 1</small><strong>Specify metric and conditions</strong></li>
          <li class="step"><small>Step 2</small><a>Configure actions</a></li>
          <li class="step"><small>Step 3</small><span>Add name and description</span></li>
          <li class="step"><small>Step 4</small><span>Preview and create</span></li>
        </ol>
        <main class="form">
          <h1>Specify metric and conditions</h1>
          <section class="card">
            <div class="card-head"><h2>Metric</h2><button class="edit">Edit</button></div>
            <div class="card-body">
              <div class="graph-title">Graph</div>
              <p class="graph-desc">This alarm will trigger when the blue line goes above the red line for 1 datapoints within 5 minutes.</p>
              <div class="metric-row">
                <div class="chart-col">
                  <svg class="chart" viewBox="696 815 780 603">
                    <g class="grid-l">
                      <path d="M762 930H1386M762 1107.500H1386" stroke="#eaeded" stroke-width="2"/>
                      <path d="M762 1285H772" stroke="#eaeded" stroke-width="2"/>
                      <path d="M772 1285V1300M977 1285V1300M1181 1285V1300M1386 1285V1300" stroke="#d5dbdb" stroke-width="2"/>
                      <path d="M772 1285H1386" stroke="#cccccc" stroke-width="5"/>
                    </g>
                    <path d="M772 930H1386" stroke="#d13a3a" stroke-width="2.500" stroke-dasharray="9 5" fill="none"/>
                    <path d="M1250 1285L1266 1207.500L1284 1213.400L1299 1205.500H1319L1351.500 1200L1368 1114" fill="none" stroke="#3a75b0" stroke-width="3"/>
                    <g fill="#545b64"><path d="M1358 829H1370L1358 841ZM1386 829H1374L1386 841ZM1358 857H1370L1358 845ZM1386 857H1374L1386 845Z"/></g>
                    <path d="M1361 832L1383 854M1383 832L1361 854" stroke="#545b64" stroke-width="5" fill="none"/>
                    <text x="696" y="885" class="c-unit">Percent</text>
                    <text x="755" y="939" class="c-y">2</text>
                    <text x="793" y="955" class="c-red">2</text>
                    <text x="755" y="1117" class="c-y">1.15</text>
                    <text x="755" y="1295" class="c-y">0.3</text>
                    <text x="772" y="1331" class="c-x">11:00</text>
                    <text x="977" y="1331" class="c-x">12:00</text>
                    <text x="1181" y="1331" class="c-x">13:00</text>
                    <text x="1386" y="1331" class="c-x">14:00</text>
                    <rect x="742" y="1356" width="24" height="24" rx="7" fill="#3a75b0"/>
                    <text x="774" y="1377" class="c-leg">CPUUtilization</text>
                  </svg>
                </div>
                <div class="fields">
                  <div class="f-label f-ns">Namespace</div>
                  <div class="f-value">AWS/EC2</div>
                  <div class="f-label f-mn">Metric name</div>
                  <div class="f-input">CPUUtilization</div>
                  <div class="f-label f-next">Statistic</div>
                  <div class="f-input f-stat">
                    <svg class="f-mag" viewBox="0 0 28 28"><circle cx="12" cy="12" r="9.500" fill="none" stroke="#687078" stroke-width="3"/><path d="M19 19L26 26" stroke="#687078" stroke-width="3.500"/></svg>
                    <span>Average</span>
                    <svg class="f-clear" viewBox="0 0 26 26"><path d="M1 1L25 25M25 1L1 25" stroke="#545b64" stroke-width="3.500"/></svg>
                  </div>
                  <div class="f-label f-next f-per">Period</div>
                  <div class="f-input f-sel"><span>5 minutes</span><svg class="f-caret" viewBox="0 0 20 16"><path d="M0 0H20L10 16Z" fill="#545b64"/></svg></div>
                </div>
              </div>
            </div>
          </section>
          <section class="card card-2">
            <div class="card-head"><h2>Conditions</h2></div>
            <div class="card-fill"></div>
          </section>
        </main>
      </div>
    </div>
  </div>

  <footer class="aws-foot">
    <svg class="shell" viewBox="0 0 32 32"><rect x="2" y="2" width="28" height="28" rx="4" fill="none" stroke="#fff" stroke-width="3"/><path d="M9 9L16 16L9 23M18 23H23" fill="none" stroke="#fff" stroke-width="3"/></svg>
    <span class="ft-cs">CloudShell</span>
    <span class="ft-fb">Feedback</span>
    <span class="ft-la">Language</span>
    <div class="ft-right">
      <span class="ft-copy">© 2023, Amazon Web Services, Inc. or its affiliates.</span>
      <span class="ft-pr">Privacy</span>
      <span class="ft-te">Terms</span>
      <span class="ft-co">Cookie preferences</span>
    </div>
  </footer>
</div>

<div class="dock-band">
  <div class="dock">
    <div class="dk on"><svg class="dk-i"><use href="#d-finder"/></svg></div>
    <div class="dk"><svg class="dk-i"><use href="#d-launch"/></svg></div>
    <div class="dk on"><svg class="dk-i"><use href="#d-msg"/></svg><b class="badge">13</b></div>
    <div class="dk on"><svg class="dk-i"><use href="#d-safari"/></svg></div>
    <div class="dk"><svg class="dk-i"><use href="#d-fox"/></svg></div>
    <div class="dk on"><svg class="dk-i"><use href="#d-chrome"/></svg></div>
    <div class="dk on"><svg class="dk-i"><use href="#d-proton"/></svg></div>
    <div class="dk"><svg class="dk-i"><use href="#d-postman"/></svg></div>
    <div class="dk on"><svg class="dk-i"><use href="#d-vscode"/></svg></div>
    <div class="dk on"><svg class="dk-i"><use href="#d-term"/></svg></div>
    <div class="dk"><svg class="dk-i"><use href="#d-pg"/></svg></div>
    <div class="dk on"><svg class="dk-i"><use href="#d-slack"/></svg><b class="badge">56</b></div>
    <div class="dk on"><svg class="dk-i"><use href="#d-mail"/></svg><b class="badge badge-w">276</b></div>
    <div class="dk on"><svg class="dk-i dk-big"><use href="#d-ever"/></svg></div>
    <div class="dk"><svg class="dk-i"><use href="#d-face"/></svg><b class="badge">2</b></div>
    <div class="dk on"><svg class="dk-i"><use href="#d-cal"/></svg></div>
    <div class="dk"><svg class="dk-i"><use href="#d-rem"/></svg></div>
    <div class="dk"><svg class="dk-i"><use href="#d-notes"/></svg></div>
    <div class="dk"><svg class="dk-i"><use href="#d-free"/></svg></div>
    <div class="dk"><svg class="dk-i"><use href="#d-tv"/></svg></div>
    <div class="dk"><svg class="dk-i"><use href="#d-music"/></svg></div>
    <div class="dk"><svg class="dk-i"><use href="#d-pod"/></svg></div>
    <div class="dk"><svg class="dk-i"><use href="#d-store"/></svg></div>
    <div class="dk on"><svg class="dk-i"><use href="#d-spot"/></svg></div>
    <div class="dk"><svg class="dk-i"><use href="#d-notion"/></svg></div>
    <div class="dk on"><svg class="dk-i"><use href="#d-nord"/></svg></div>
    <div class="dk"><svg class="dk-i"><use href="#d-ycloud"/></svg></div>
    <div class="dk on"><svg class="dk-i"><use href="#d-sys"/></svg></div>
    <div class="dk on"><svg class="dk-i"><use href="#d-trello"/></svg></div>
    <div class="dk"><svg class="dk-i"><use href="#d-figma"/></svg></div>
    <div class="dk on"><svg class="dk-i"><use href="#d-py"/></svg></div>
    <div class="dk on"><svg class="dk-i"><use href="#d-out"/></svg></div>
    <div class="dk on"><svg class="dk-i"><use href="#d-teams"/></svg></div>
    <div class="dk on"><svg class="dk-i"><use href="#d-word"/></svg></div>
    <i class="dk-sep"></i>
    <div class="dk on"><svg class="dk-i"><use href="#d-key"/></svg></div>
    <div class="dk on"><svg class="dk-i"><use href="#d-prev"/></svg></div>
    <div class="dk on"><svg class="dk-i"><use href="#d-num"/></svg></div>
    <div class="dk on"><svg class="dk-i"><use href="#d-ppt"/></svg></div>
    <i class="dk-sep"></i>
    <div class="dk"><svg class="dk-i"><use href="#d-v"/></svg></div>
    <div class="dk"><svg class="dk-i dk-th"><use href="#d-thumb"/></svg><svg class="dk-mini"><use href="#d-word"/></svg></div>
    <div class="dk"><svg class="dk-i dk-th dk-th-s"><use href="#d-thumb"/></svg><svg class="dk-mini"><use href="#d-word"/></svg></div>
    <div class="dk"><i class="dk-blank"></i><svg class="dk-mini"><use href="#d-chrome"/></svg></div>
    <div class="dk"><i class="dk-blank"></i><svg class="dk-mini"><use href="#d-chrome"/></svg></div>
    <div class="dk"><svg class="dk-i dk-trash"><use href="#d-trash"/></svg></div>
  </div>
</div>
</body>
</html>
```

FILE: styles.css
```css
* { box-sizing: border-box; }
html, body { margin: 0; padding: 0; }
body {
  width: 2880px;
  height: 1800px;
  overflow: hidden;
  background: #121212;
  font-family: Roboto, "Liberation Sans", sans-serif;
  display: flex;
  flex-direction: column;
}
svg { display: block; flex: none; }
.defs { position: absolute; width: 0; height: 0; }

/* macOS menu bar */
.menubar {
  height: 47px;
  flex: none;
  display: flex;
  align-items: center;
  padding-left: 40px;
  background: linear-gradient(90deg, #90c3df 0%, #a5d5ea 50%, #b6e2f0 100%);
  color: #16191f;
  font-size: 27px;
}
.apple { width: 24px; height: 30px; }
.menu-items { display: flex; gap: 41.500px; margin-left: 42px; }
.menu-items span:nth-child(2) { margin-left: 1.500px; }
.menu-app { font-weight: 700; font-size: 28px; }
.status { margin-left: auto; display: flex; align-items: center; padding-right: 42px; }
.st-ever { width: 28px; height: 32px; margin-right: 36px; }
.st-mtn { width: 36px; height: 32px; margin-right: 34px; }
.st-ele { width: 40px; height: 32px; margin-right: 38px; }
.st-win { width: 32px; height: 32px; margin-right: 40px; }
.st-play { width: 32px; height: 32px; margin-right: 33px; }
.st-bat { width: 50px; height: 28px; margin-right: 38px; }
.st-wifi { width: 36px; height: 28px; margin-right: 38px; }
.st-find { width: 28px; height: 28px; margin-right: 26px; }
.st-cc { width: 30px; height: 32px; margin-right: 10px; }
.st-dot { width: 10px; height: 10px; border-radius: 50%; background: #f09a3a; margin-right: 20px; }
.clock { white-space: nowrap; letter-spacing: .3px; }

/* window */
.window {
  margin-top: 2px;
  height: 1659px;
  flex: none;
  display: flex;
  flex-direction: column;
  border-top: 1px solid #6a6b6e;
  border-radius: 20px;
  overflow: hidden;
  background: #202124;
}
.tabstrip {
  height: 84px;
  flex: none;
  display: flex;
  align-items: center;
  padding-top: 16px;
  background: #202124;
}
.lights { display: flex; gap: 16px; align-self: flex-start; margin: 15px 41px 0 42px; }
.lights i { width: 24px; height: 24px; border-radius: 50%; display: block; }
.l-red { background: #ee6a5f; }
.l-yel { background: #f5bd4f; }
.l-grn { background: #61c454; }
.tab {
  width: 62px;
  height: 40px;
  flex: none;
  display: flex;
  align-items: center;
  justify-content: center;
  border-right: 2px solid #5f6368;
}
.tab-n { width: 60px; }
.tab-last { width: 59px; border-right: 0; }
.fav { width: 32px; height: 32px; }
.tab-active {
  width: 64px;
  align-self: stretch;
  flex: none;
  display: flex;
  align-items: center;
  justify-content: center;
  background: #35363a;
  border-radius: 16px 16px 0 0;
  position: relative;
}
.tab-active::before, .tab-active::after {
  content: "";
  position: absolute;
  bottom: 0;
  width: 16px;
  height: 16px;
}
.tab-active::before { left: -16px; background: radial-gradient(circle at 0 0, transparent 16px, #35363a 16.5px); }
.tab-active::after { right: -16px; background: radial-gradient(circle at 100% 0, transparent 16px, #35363a 16.5px); }
.tab-x { width: 20px; height: 20px; }
.tab-plus { width: 24px; height: 24px; margin-left: 32px; }
.tab-chev { width: 20px; height: 12px; margin-left: 133px; }

.toolbar {
  height: 64px;
  flex: none;
  display: flex;
  align-items: center;
  padding: 8px 0 0 12px;
  background: #35363a;
}
.tb-btn { width: 64px; height: 56px; flex: none; display: flex; align-items: center; justify-content: center; }
.tb-ico { width: 28px; height: 28px; }
.omnibox {
  width: 2262px;
  height: 56px;
  margin: 0 13px;
  flex: none;
  display: flex;
  align-items: center;
  padding: 0 3px 0 26px;
  border-radius: 28px;
  background: #202124;
}
.lock { width: 18px; height: 24px; margin-right: 23px; }
.url { flex: 1; font-size: 29px; letter-spacing: .16px; color: #9aa0a6; white-space: nowrap; overflow: hidden; }
.url-host { color: #e8eaed; }
.avatar { width: 44px; height: 44px; border-radius: 50%; background: #5b6bbf; color: #e8eaed; font-size: 24px; display: flex; align-items: center; justify-content: center; }
.update {
  width: 173px;
  height: 56px;
  margin-left: 5px;
  flex: none;
  display: flex;
  align-items: center;
  justify-content: space-between;
  padding: 0 23px 0 25px;
  border: 2px solid #f0a8a0;
  border-radius: 28px;
  background: #4a3f3f;
  color: #f0a8a0;
  font-size: 28px;
}
.update-dots { width: 6px; height: 24px; }

.bookmarks {
  height: 72px;
  flex: none;
  display: grid;
  grid-template-columns: 301px 307px 299px 297px 182px 307px 309px 308px 490px 1fr;
  align-items: center;
  padding-left: 28px;
  background: #35363a;
  color: #e8eaed;
  font-size: 26px;
  letter-spacing: -.15px;
  white-space: nowrap;
}
.bm { display: flex; align-items: center; gap: 16px; }
.bm-card { margin-left: -14px; margin-right: -8px; }
.bm-more { font-size: 28px; }

/* AWS header */
.aws-head {
  height: 84px;
  flex: none;
  display: flex;
  align-items: center;
  background: #232f3e;
  border-top: 2px solid #5f6368;
  border-bottom: 2px solid #545b64;
  color: #fff;
  font-size: 24px;
}
.aws-logo { width: 133px; height: 46px; flex: none; padding-left: 36px; }
.aws-word { display: block; font-family: "Open Sans", sans-serif; font-size: 34px; line-height: 26px; color: #fff; margin-left: 2px; }
.aws-smile { width: 64px; height: 16px; margin-top: 2px; }
.aws-services { display: flex; align-items: center; gap: 16px; height: 46px; padding-left: 33px; width: 207px; flex: none; border-left: 2px solid #414c5a; }
.aws-grid { width: 32px; height: 32px; }
.aws-search {
  width: 1078px;
  height: 60px;
  flex: none;
  display: flex;
  align-items: center;
  padding: 0 18px 0 22px;
  border: 2px solid #879596;
  border-radius: 4px;
  background: #16191f;
}
.aws-mag { width: 28px; height: 28px; }
.aws-ph { margin-left: 21px; font-style: italic; font-size: 28px; color: #aab7b8; }
.aws-key { margin-left: auto; font-size: 28px; letter-spacing: .7px; color: #aab7b8; }
.aws-right { margin-left: auto; display: flex; align-items: center; height: 46px; flex: none; font-size: 25px; }
.ar { height: 46px; display: flex; align-items: center; border-right: 2px solid #414c5a; }
.ar-1 { width: 98px; justify-content: center; padding-left: 2px; }
.ar-2 { width: 102px; justify-content: center; }
.ar-3 { width: 98px; justify-content: center; }
.ar-4 { width: 176px; padding-left: 35px; gap: 12px; }
.ar-5 { width: 472px; padding-left: 35px; gap: 14px; border-right: 0; }
.shell { width: 32px; height: 32px; }
.caret { width: 0; height: 0; border-left: 8px solid transparent; border-right: 8px solid transparent; border-top: 12px solid #fff; }

/* Console */
.console { flex: 1; min-height: 0; display: flex; background: #f2f3f3; }
.rail { width: 82px; flex: none; background: #fff; border-right: 2px solid #d5dbdb; padding: 28px 26px; }
.burger { width: 28px; height: 24px; }
.workspace { flex: 1; min-width: 0; display: flex; flex-direction: column; padding: 0 0 10px 14px; }
.crumbs { height: 48px; flex: none; display: flex; align-items: center; font-size: 28.500px; gap: 22px; }
.crumbs a { color: #1d6cb5; }
.crumb-sep { width: 20px; height: 30px; }
.crumb-here { color: #687078; font-weight: 700; font-size: 28px; letter-spacing: .1px; }
.wizard { flex: 1; min-height: 0; overflow: hidden; display: grid; grid-template-columns: 400px 1640px; column-gap: 160px; align-items: start; }
.steps { list-style: none; margin: 0; padding: 15px 0 0; }
.step { display: flex; flex-direction: column; padding-bottom: 37px; margin-bottom: 32px; border-bottom: 2px solid #d5dbdb; font-size: 28px; line-height: 36px; letter-spacing: .2px; color: #687078; }
.step:last-child { border-bottom: 0; }
.step small { font-size: 24px; line-height: 32px; margin-bottom: 11px; letter-spacing: .1px; color: #687078; }
.step strong { color: #16191f; font-weight: 700; letter-spacing: .55px; }
.step a { color: #1d6cb5; }
.form { padding-top: 19px; }
h1 { margin: 0 0 45px; font-size: 56px; line-height: 64px; font-weight: 400; letter-spacing: .45px; color: #16191f; }
.card {
  background: #fff;
  box-shadow: 0 2px 2px 0 rgba(0, 28, 36, .3), 2px 1px 2px 0 rgba(0, 28, 36, .12), -2px 1px 2px 0 rgba(0, 28, 36, .12);
}
.card-2 { margin-top: 41px; }
.card-head {
  height: 126px;
  display: flex;
  align-items: center;
  justify-content: space-between;
  padding: 0 40px 4px;
  background: #fafafa;
  border-top: 2px solid #eaeded;
  border-bottom: 2px solid #eaeded;
}
.card-2 .card-head { padding-bottom: 2px; }
h2 { margin: 0; font-size: 36px; font-weight: 700; letter-spacing: .5px; color: #16191f; }
.edit {
  width: 137px;
  height: 62px;
  border: 2px solid #545b64;
  border-radius: 3px;
  background: #fff;
  color: #545b64;
  font: 700 28px Roboto, sans-serif;
  letter-spacing: .5px;
}
.card-body { padding: 38px 40px 40px; }
.card-fill { height: 100px; }
.graph-title { font-size: 28px; line-height: 38px; letter-spacing: .3px; color: #16191f; }
.graph-desc { margin: 2px 0 47px; font-size: 24.900px; line-height: 34px; color: #545b64; }
.metric-row { display: flex; height: 603px; }
.chart-col { width: 782px; flex: none; border-right: 2px solid #eaeded; }
.chart { width: 780px; height: 603px; }
.c-unit { font-size: 24px; fill: #545b64; }
.c-leg { font-size: 24.800px; fill: #545b64; }
.c-y { font-size: 25px; fill: #16191f; text-anchor: end; }
.c-x { font-size: 26px; fill: #16191f; text-anchor: middle; }
.c-red { font-size: 24px; font-weight: 700; fill: #d13a3a; }
.fields { flex: 1; padding-left: 40px; font-size: 28px; line-height: 38px; color: #16191f; }
.f-ns { margin-top: 43px; letter-spacing: -.4px; }
.f-value { margin-top: 6px; }
.f-mn { margin-top: 47px; }
.f-input {
  height: 64px;
  margin-top: 9px;
  display: flex;
  align-items: center;
  padding: 2px 16px 0;
  border: 2px solid #879596;
  border-radius: 3px;
  background: #fff;
  letter-spacing: .25px;
}
.f-next { margin-top: 44px; }
.f-stat { margin-top: 10px; }
.f-mag { width: 28px; height: 28px; margin-right: 21px; }
.f-clear { width: 26px; height: 26px; margin-left: auto; margin-right: 2px; }
.f-per + .f-sel { margin-top: 18px; }
.f-caret { width: 20px; height: 16px; margin-left: auto; margin-right: 5px; }

/* footer */
.aws-foot {
  height: 62px;
  flex: none;
  display: flex;
  align-items: center;
  padding: 0 32px;
  background: #232f3e;
  border-top: 2px solid #545b64;
  color: #eaeded;
  font-size: 24px;
  letter-spacing: .05px;
  white-space: nowrap;
}
.ft-cs { margin-left: 10px; letter-spacing: .45px; }
.ft-fb { margin-left: 49px; }
.ft-la { margin-left: 53px; }
.ft-right { margin-left: auto; display: flex; }
.ft-copy { letter-spacing: .1px; }
.ft-pr { margin-left: 64px; }
.ft-te { margin-left: 58px; }
.ft-co { margin-left: 53px; }

/* dock */
.dock-band {
  flex: 1;
  min-height: 0;
  padding: 2px 46px 0 45px;
  background:
    linear-gradient(#121212 0 81px, transparent 81px),
    linear-gradient(90deg, #121212 185px, #d8ccb0 185px 457px, #121212 457px 750px, #a6adc4 750px 1025px, #121212 1025px 1319px, #000 1319px 1590px, #121212 1590px);
}
.dock {
  height: 79px;
  display: flex;
  padding-left: 3px;
  border: 2px solid #3a3a3c;
  border-radius: 20px;
  background: linear-gradient(90deg, #1e1e1e 0, #26251f 60px, #6a6558 170px, #6a6558 360px, #4d4a40 460px, #25241f 540px, #1d1d1d 620px, #30323a 740px, #4f525b 860px, #4a4d55 950px, #25262a 1040px, #1c1c1c 1110px);
}
.dk { width: 62px; flex: none; position: relative; display: flex; flex-direction: column; align-items: center; padding-top: 11px; }
.dk-i { width: 48px; height: 48px; }
.dk-big { width: 52px; height: 52px; margin-top: -3px; margin-bottom: -1px; }
.dk.on::after { content: ""; width: 5px; height: 5px; border-radius: 50%; background: #a9a9a9; margin-top: 11px; }
.dk-sep { width: 2px; height: 60px; margin: 8px 12px 0 12px; background: #555; flex: none; }
.badge {
  position: absolute;
  top: 6px;
  left: 37px;
  min-width: 22px;
  height: 22px;
  padding: 0 3px;
  border-radius: 11px;
  background: #e5453a;
  color: #fff;
  font: 400 15px/22px Roboto, sans-serif;
  text-align: center;
}
.badge-w { left: 30px; width: 30px; }
.dk-th { width: 50px; height: 54px; margin-top: -3px; }
.dk-th-s { height: 34px; margin-top: 9px; }
.dk-blank { display: block; width: 54px; height: 32px; margin-top: 9px; background: #26262a; }
.dk-mini { position: absolute; left: 32px; top: 44px; width: 18px; height: 18px; }
.dk-trash { width: 44px; height: 52px; margin-top: -3px; }

/* svg text */
.svg-cal { font: 700 15px Roboto, sans-serif; fill: #1a5fc8; text-anchor: middle; }
.svg-term { font: 700 14px "Liberation Mono", monospace; fill: #38d048; }
.svg-may { font: 700 9px Roboto, sans-serif; fill: #fff; text-anchor: middle; }
.svg-day { font: 400 26px Roboto, sans-serif; fill: #333; text-anchor: middle; }
.svg-tv { font: 700 20px "Liberation Sans", sans-serif; fill: #eee; text-anchor: middle; }
.svg-notion { font: 700 26px "Liberation Serif", serif; fill: #111; text-anchor: middle; }
.svg-pc { font: 700 16px Roboto, sans-serif; fill: #fff; }
.svg-off { font: 700 13px Roboto, sans-serif; fill: #fff; text-anchor: middle; }
.svg-v { font: 900 36px Roboto, sans-serif; fill: #1a50d0; text-anchor: middle; }
```
